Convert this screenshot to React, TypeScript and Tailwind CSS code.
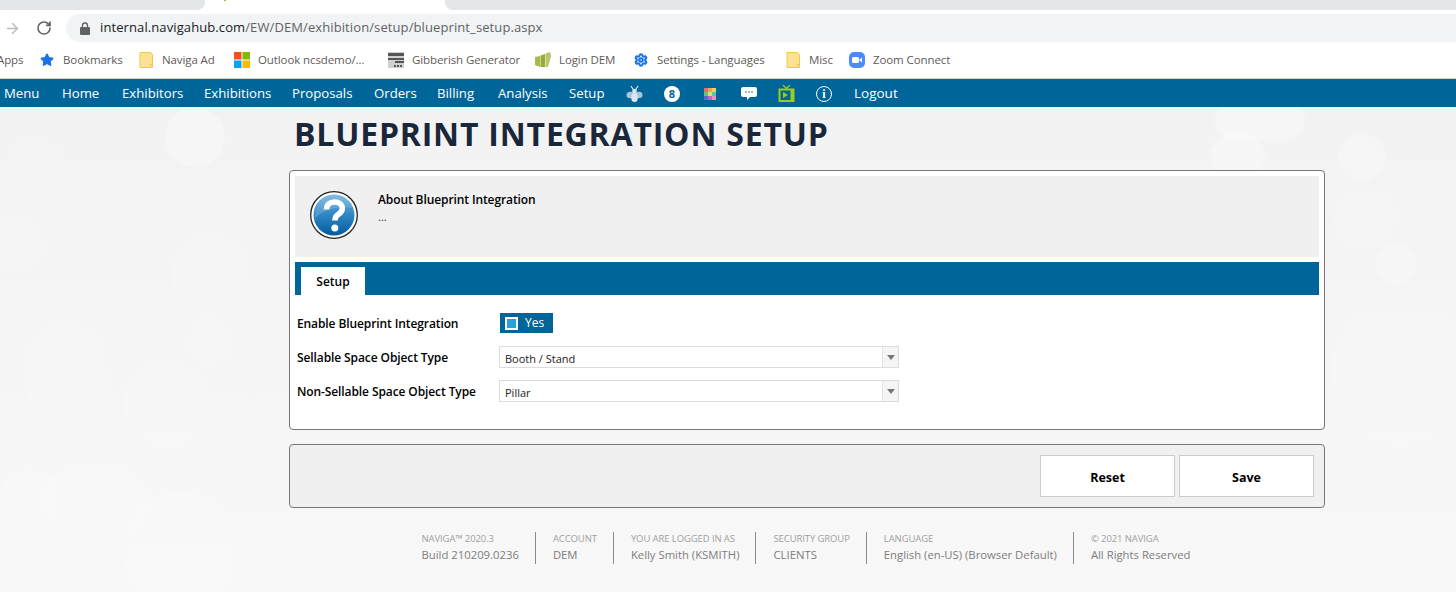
import React from 'react';
import { ArrowRight, RotateCw, Star, Settings } from 'lucide-react';

const uiFont = "font-['Open_Sans','Noto_Sans',sans-serif]";

const FolderIcon = () => (
  <svg width="14" height="16" viewBox="0 0 14 16" className="mr-px shrink-0">
    <path d="M1 .5h10.500l2 2v13H1z" fill="#fde293" stroke="#f0c948" />
    <path d="M11 15.500v-3h2.500" fill="none" stroke="#f0c948" />
  </svg>
);

const Bookmark = ({ icon, label, width }: { icon?: React.ReactNode; label: string; width: string }) => (
  <div className={`flex shrink-0 items-center gap-2 ${width}`}>
    {icon}
    <span className="whitespace-nowrap text-[11.500px] tracking-[-0.1px] text-[#5f5a58]">{label}</span>
  </div>
);

const navItems = [
  { label: 'Menu', width: 'w-[58px]' },
  { label: 'Home', width: 'w-[60px]' },
  { label: 'Exhibitors', width: 'w-[82px]' },
  { label: 'Exhibitions', width: 'w-[88px]' },
  { label: 'Proposals', width: 'w-[82px]' },
  { label: 'Orders', width: 'w-[63px]' },
  { label: 'Billing', width: 'w-[61px]' },
  { label: 'Analysis', width: 'w-[71px]' },
  { label: 'Setup', width: 'w-[59px]' },
];

const gridColors = ['#ef6c6c', '#f2a65a', '#f4d35e', '#6fbf73', '#d9e27a', '#5bc0be', '#5c6bc0', '#ba68c8', '#f48fb1'];

const footerCols = [
  { top: 'NAVIGA™ 2020.3', bottom: 'Build 210209.0236' },
  { top: 'ACCOUNT', bottom: 'DEM' },
  { top: 'YOU ARE LOGGED IN AS', bottom: 'Kelly Smith (KSMITH)' },
  { top: 'SECURITY GROUP', bottom: 'CLIENTS' },
  { top: 'LANGUAGE', bottom: 'English (en-US) (Browser Default)' },
  { top: '© 2021 NAVIGA', bottom: 'All Rights Reserved' },
];

const SelectBox = ({ value }: { value: string }) => (
  <div className="mb-[2px] flex h-[22px] w-[400px] items-stretch border border-[#dcdcdc] bg-white">
    <span className="flex-1 pl-[5px] text-[11px] leading-[23px] text-[#222]">{value}</span>
    <span className="flex w-[16px] items-center justify-center border-l border-[#e2e2e2] bg-[#f5f5f5]">
      <span className="h-0 w-0 border-x-[4px] border-t-[5px] border-x-transparent border-t-[#777]" />
    </span>
  </div>
);

const FormRow = ({ label, children }: { label: string; children: React.ReactNode }) => (
  <div className="flex h-[34px] items-center">
    <label className="w-[204px] pl-[2px] text-[12px] font-semibold tracking-[-0.1px] text-[#000]">{label}</label>
    {children}
  </div>
);

const HelpIcon = () => (
  <svg width="48" height="48" viewBox="0 0 48 48" className="ml-[15px] mt-[15px] shrink-0">
    <defs>
      <linearGradient id="helpFill" x1="0" y1="0" x2="0" y2="1">
        <stop offset="0" stopColor="#6db2df" />
        <stop offset="0.500" stopColor="#2f86c2" />
        <stop offset="1" stopColor="#005c9e" />
      </linearGradient>
    </defs>
    <circle cx="24" cy="24" r="23.300" fill="#fff" stroke="#222" strokeWidth="1.300" />
    <circle cx="24" cy="24" r="20.500" fill="url(#helpFill)" />
    <path d="M5 28C10 20 26 14 43 17 40 8 32 3.500 24 3.500 13 3.500 4 13 5 28z" fill="#fff" opacity=".14" />
    <path
      d="M16.500 18.500c0-5 3.500-7.500 8-7.500 4.800 0 7.800 2.700 7.800 6.300 0 3.800-2.800 5.300-4.800 6.800-1.800 1.400-2.500 2.600-2.500 5.400"
      fill="none"
      stroke="#fff"
      strokeWidth="5.600"
    />
    <circle cx="24.800" cy="37" r="3.500" fill="#fff" />
  </svg>
);

const App = () => {
  return (
    <div className={`relative h-[592px] w-[1456px] overflow-hidden bg-gradient-to-b from-[#f1f1f1] to-[#f8f8f8] ${uiFont}`}>
      {/* Bokeh background */}
      <div className="absolute left-[165px] top-[107px] h-[60px] w-[60px] rounded-full bg-white/30" />
      <div className="absolute left-[5px] top-[135px] h-[60px] w-[60px] rounded-full bg-white/10 blur-[2px]" />
      <div className="absolute left-[-25px] top-[212px] h-[60px] w-[70px] rounded-full bg-white/15 blur-[1px]" />
      <div className="absolute left-[170px] top-[230px] h-[90px] w-[80px] rounded-full bg-white/10 blur-[2px]" />
      <div className="absolute left-[20px] top-[315px] h-[110px] w-[90px] rounded-full bg-white/10 blur-[2px]" />
      <div className="absolute left-[122px] top-[360px] h-[90px] w-[90px] rounded-full bg-white/15 blur-[1px]" />
      <div className="absolute left-[185px] top-[315px] h-[50px] w-[50px] rounded-full bg-white/15 blur-[1px]" />
      <div className="absolute left-[0px] top-[467px] h-[60px] w-[60px] rounded-full bg-white/15" />
      <div className="absolute left-[40px] top-[465px] h-[70px] w-[110px] rounded-full bg-white/15 blur-[1px]" />
      <div className="absolute left-[120px] top-[490px] h-[120px] w-[120px] rounded-full bg-white/15 blur-[2px]" />
      <div className="absolute left-[1215px] top-[100px] h-[40px] w-[90px] rounded-full bg-white/35 blur-[2px]" />
      <div className="absolute left-[1210px] top-[132px] h-[50px] w-[55px] rounded-full bg-white/35 blur-[2px]" />
      <div className="absolute left-[1338px] top-[133px] h-[48px] w-[48px] rounded-full bg-white/25 blur-[1px]" />
      <div className="absolute left-[1375px] top-[243px] h-[42px] w-[42px] rounded-full bg-white/25 blur-[1px]" />
      <div className="absolute left-[1330px] top-[180px] h-[70px] w-[70px] rounded-full bg-white/15 blur-[4px]" />
      <div className="absolute left-[1330px] top-[290px] h-[160px] w-[140px] rounded-full bg-white/15 blur-[6px]" />

      <div className="relative">
        {/* Tab strip */}
        <div className="flex h-[10px] bg-white">
          <div className="h-full w-[205px] rounded-br-lg bg-[#e4e7ea]" />
          <div className="h-full w-[240px] pl-[19px]">
            <div className="h-[1px] w-[2px] bg-[#a9b94c]" />
          </div>
          <div className="h-full flex-1 rounded-bl-lg bg-[#e4e7ea]" />
        </div>

        {/* Address bar */}
        <div className="flex h-[32px] items-center bg-white pt-[4px]">
          <ArrowRight className="ml-[4px] h-[17px] w-[17px] text-[#b9bbbd]" strokeWidth={2} />
          <RotateCw className="ml-[15px] h-[16px] w-[16px] text-[#5f6368]" strokeWidth={2.4} />
          <div className="ml-[14px] flex h-[28px] flex-1 items-center rounded-l-full bg-[#f1f3f4] pl-[14px]">
            <svg width="10" height="13" viewBox="0 0 10 13" className="shrink-0">
              <path d="M2.500 6V3.500a2.500 2.500 0 015 0V6" fill="none" stroke="#5f6368" strokeWidth="1.300" />
              <rect y="5" width="10" height="8" rx="1" fill="#5f6368" />
            </svg>
            <span className="ml-[10px] text-[13px] tracking-[0.1px] text-[#5f6368]">
              <span className="text-[#202124]">internal.navigahub.com</span>/EW/DEM/exhibition/setup/blueprint_setup.aspx
            </span>
          </div>
        </div>

        {/* Bookmarks bar */}
        <div className="flex h-[36px] items-center overflow-hidden bg-white">
          <span className="ml-[-3px] w-[43px] shrink-0 text-[11.500px] tracking-[-0.1px] text-[#5f5a58]">Apps</span>
          <Bookmark width="w-[99px]" label="Bookmarks" icon={<Star className="mr-px h-[14px] w-[14px] text-[#1a73e8]" fill="#1a73e8" />} />
          <Bookmark width="w-[95px]" label="Naviga Ad" icon={<FolderIcon />} />
          <Bookmark
            width="w-[154px]"
            label="Outlook ncsdemo/..."
            icon={
              <svg width="16" height="16" viewBox="0 0 16 16" className="shrink-0">
                <rect width="7.500" height="7.500" fill="#f25022" />
                <rect x="8.500" width="7.500" height="7.500" fill="#7fba00" />
                <rect y="8.500" width="7.500" height="7.500" fill="#00a4ef" />
                <rect x="8.500" y="8.500" width="7.500" height="7.500" fill="#ffb900" />
              </svg>
            }
          />
          <Bookmark
            width="w-[147px]"
            label="Gibberish Generator"
            icon={
              <svg width="16" height="16" viewBox="0 0 16 16" className="shrink-0">
                <rect width="16" height="16" fill="#d0d0d0" />
                <rect y="1" width="16" height="3" fill="#555" />
                <rect y="6" width="16" height="2" fill="#555" />
                <rect x="7" y="9" width="9" height="2" fill="#555" />
                <rect x="6" y="13" width="2" height="2" fill="#555" />
                <rect x="9" y="13" width="2" height="2" fill="#555" />
                <rect x="12" y="13" width="2" height="2" fill="#555" />
              </svg>
            }
          />
          <Bookmark
            width="w-[99px]"
            label="Login DEM"
            icon={
              <svg width="16" height="16" viewBox="0 0 16 16" className="shrink-0">
                <path d="M0 5l5-1v11L0 13z" fill="#a9b94c" />
                <path d="M5.500 3.500L10 2v13l-4.500 0z" fill="#98aa3d" />
                <path d="M10.500 1.500L15 0l1 4-3 11h-2.500z" fill="#b7c565" />
              </svg>
            }
          />
          <Bookmark width="w-[152px]" label="Settings - Languages" icon={<Settings className="mr-px h-[14px] w-[14px] text-[#1a73e8]" strokeWidth={3.5} />} />
          <Bookmark width="w-[63px]" label="Misc" icon={<FolderIcon />} />
          <Bookmark
            width="w-[120px]"
            label="Zoom Connect"
            icon={
              <svg width="16" height="16" viewBox="0 0 16 16" className="shrink-0">
                <rect width="16" height="16" rx="5" fill="#4a8cff" />
                <rect x="3" y="5" width="7" height="6" rx="1.500" fill="#fff" />
                <path d="M10.500 7.500l2.500-2v5l-2.500-2z" fill="#fff" />
              </svg>
            }
          />
        </div>

        {/* Main nav */}
        <nav className="flex h-[29px] items-center border-t border-[#d6d6d6] bg-[#006699] pl-[4px] pt-px text-[13.200px] text-white">
          {navItems.map((item) => (
            <span key={item.label} className={`${item.width} whitespace-nowrap`}>
              {item.label}
            </span>
          ))}
          <div className="flex items-center">
            <svg width="17" height="18" viewBox="0 0 17 18" className="ml-[-2px] mr-[21px]">
              <ellipse cx="4.500" cy="10" rx="4" ry="3.200" fill="#a9c4d8" />
              <ellipse cx="12.500" cy="10" rx="4" ry="3.200" fill="#a9c4d8" />
              <ellipse cx="8.500" cy="12.500" rx="3.300" ry="4.500" fill="#d9e8f2" />
              <circle cx="8.500" cy="6" r="2.300" fill="#d9e8f2" />
              <path d="M5 1l2.500 4M12 1L9.500 5" stroke="#d9e8f2" strokeWidth="1.200" fill="none" />
            </svg>
            <div className="mr-[24px] flex h-[16px] w-[16px] items-center justify-center rounded-full bg-white text-[11px] font-bold leading-none text-[#006699]">
              8
            </div>
            <div className="mr-[25px] grid grid-cols-3">
              {gridColors.map((color) => (
                <span key={color} className="h-[4px] w-[4px]" style={{ backgroundColor: color }} />
              ))}
            </div>
            <svg width="16" height="15" viewBox="0 0 16 15" className="mr-[21px]">
              <path d="M2 1h12a2 2 0 012 2v6a2 2 0 01-2 2H9l-3 3v-3H2a2 2 0 01-2-2V3a2 2 0 012-2z" fill="#fff" />
              <circle cx="5" cy="6" r=".8" fill="#006699" />
              <circle cx="8" cy="6" r=".8" fill="#006699" />
              <circle cx="11" cy="6" r=".8" fill="#006699" />
            </svg>
            <svg width="17" height="18" viewBox="0 0 17 18" className="mr-[21px]">
              <path d="M5 0l3.500 3.500L12 0" fill="none" stroke="#9acd1e" strokeWidth="1.300" />
              <rect x=".5" y="3.500" width="16" height="13.500" fill="#9acd1e" />
              <rect x="2.500" y="5.500" width="10" height="9.500" fill="#006699" />
              <path d="M5 7l5 3-5 3z" fill="#9acd1e" />
            </svg>
            <div className="mr-[22px] flex h-[16px] w-[16px] items-center justify-center rounded-full border-[1.500px] border-white font-['Liberation_Serif',serif] text-[12px] font-bold leading-none text-white">
              i
            </div>
            <span className="text-[13.500px]">Logout</span>
          </div>
        </nav>

        {/* Page body */}
        <main className="ml-[289px] w-[1036px]">
          <h1 className="h-[63px] pl-[5px] pt-[7px] text-[32px] font-bold leading-[40px] tracking-[0.800px] whitespace-nowrap text-[#1a2639] [text-shadow:0_1px_1px_#fff]">
            BLUEPRINT INTEGRATION SETUP
          </h1>

          <section className="h-[260px] rounded-[4px] border border-[#777] bg-white p-[5px]">
            <div className="flex h-[81px] bg-[#f0f0f0]">
              <HelpIcon />
              <div className="ml-[20px] pt-[15px]">
                <div className="text-[12px] font-semibold leading-[18px] tracking-[-0.1px] text-[#000]">About Blueprint Integration</div>
                <div className="text-[11px] leading-[16px] text-[#333]">...</div>
              </div>
            </div>

            <div className="mt-[5px] flex h-[33px] items-end bg-[#006699] pl-[6px]">
              <div className="flex h-[28px] w-[64px] items-center justify-center bg-white pt-[2px] text-[12px] font-semibold text-[#000]">
                Setup
              </div>
            </div>

            <div className="pt-[12px]">
              <FormRow label="Enable Blueprint Integration">
                <div className="mb-[2px] ml-px flex h-[20px] w-[53px] items-center bg-[#006699] pl-[5px] text-[12px] text-white">
                  <span className="flex h-[13px] w-[13px] items-center justify-center bg-white">
                    <span className="h-[9px] w-[9px] bg-[#27a0dc]" />
                  </span>
                  <span className="ml-[7px]">Yes</span>
                </div>
              </FormRow>
              <FormRow label="Sellable Space Object Type">
                <SelectBox value="Booth / Stand" />
              </FormRow>
              <FormRow label="Non-Sellable Space Object Type">
                <SelectBox value="Pillar" />
              </FormRow>
            </div>
          </section>

          <section className="mt-[14px] flex h-[64px] items-center justify-end gap-[4px] rounded-[4px] border border-[#777] bg-[#f0f0f0] pr-[10px]">
            <button className="h-[42px] w-[135px] border border-[#ccc] bg-white pt-[4px] text-[12.500px] font-bold text-[#000]">Reset</button>
            <button className="h-[42px] w-[135px] border border-[#ccc] bg-white pt-[4px] text-[12.500px] font-bold text-[#000]">Save</button>
          </section>

          {/* Footer */}
          <footer className="mt-[24px] flex justify-center pr-[3px]">
            {footerCols.map((col, i) => (
              <div key={col.top} className={`h-[32px] pl-[17px] pr-[16px] ${i > 0 ? 'border-l border-[#8a8a8a]' : ''}`}>
                <div className="whitespace-nowrap text-[9.500px] leading-[14px] tracking-[-0.1px] text-[#a0a0a0]">{col.top}</div>
                <div className="mt-[1px] whitespace-nowrap text-[11.300px] leading-[16px] text-[#7d7d7d]">{col.bottom}</div>
              </div>
            ))}
          </footer>
        </main>
      </div>
    </div>
  );
};

export default App;
